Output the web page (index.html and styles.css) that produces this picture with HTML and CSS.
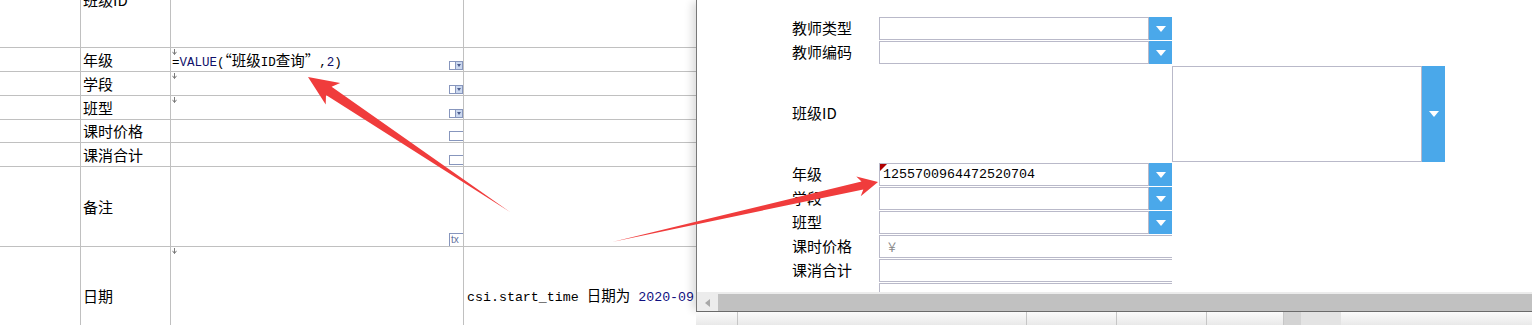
FILE: index.html
```html
<!DOCTYPE html>
<html lang="zh-CN">
<head>
<meta charset="utf-8">
<title>报表设计</title>
<link rel="stylesheet" href="styles.css">
</head>
<body>
<div class="sheet">
  <div class="c c1"></div>
  <div class="c c2"><span class="lbl">班级ID</span></div>
  <div class="c c3"></div>
  <div class="c c4"></div>

  <div class="c c1"></div>
  <div class="c c2"><span class="lbl">年级</span></div>
  <div class="c c3">
    <svg class="mk" width="5" height="6" viewBox="0 0 5 6"><path d="M2.5 0V5.5M0.5 2.8L2.5 5.5L4.5 2.8" stroke="#7a7a7a" fill="none"/></svg>
    <span class="fx">=<span class="kw">VALUE</span>(<span class="cj">“班级</span>ID<span class="cj">查询”</span>,<span class="kw">2</span>)</span>
    <span class="dd"><i></i><b></b></span>
  </div>
  <div class="c c4"></div>

  <div class="c c1"></div>
  <div class="c c2"><span class="lbl">学段</span></div>
  <div class="c c3">
    <svg class="mk" width="5" height="6" viewBox="0 0 5 6"><path d="M2.5 0V5.5M0.5 2.8L2.5 5.5L4.5 2.8" stroke="#7a7a7a" fill="none"/></svg>
    <span class="dd"><i></i><b></b></span>
  </div>
  <div class="c c4"></div>

  <div class="c c1"></div>
  <div class="c c2"><span class="lbl">班型</span></div>
  <div class="c c3">
    <svg class="mk" width="5" height="6" viewBox="0 0 5 6"><path d="M2.5 0V5.5M0.5 2.8L2.5 5.5L4.5 2.8" stroke="#7a7a7a" fill="none"/></svg>
    <span class="dd"><i></i><b></b></span>
  </div>
  <div class="c c4"></div>

  <div class="c c1"></div>
  <div class="c c2"><span class="lbl">课时价格</span></div>
  <div class="c c3"><span class="bx"></span></div>
  <div class="c c4"></div>

  <div class="c c1"></div>
  <div class="c c2"><span class="lbl">课消合计</span></div>
  <div class="c c3"><span class="bx"></span></div>
  <div class="c c4"></div>

  <div class="c c1"></div>
  <div class="c c2"><span class="lbl">备注</span></div>
  <div class="c c3"><span class="tx">tx</span></div>
  <div class="c c4"></div>

  <div class="c c1 last"></div>
  <div class="c c2 last"><span class="lbl low">日期</span></div>
  <div class="c c3 last">
    <svg class="mk" width="5" height="6" viewBox="0 0 5 6"><path d="M2.5 0V5.5M0.5 2.8L2.5 5.5L4.5 2.8" stroke="#7a7a7a" fill="none"/></svg>
  </div>
  <div class="c c4 last"><span class="sql">csi.start_time <span class="cj2">日期为</span> <span class="num">2020-09</span></span></div>
</div>

<div class="dlg-wrap">
  <div class="dialog">
    <div class="form">
      <span class="flbl">教师类型</span>
      <div class="inp"><div class="fld"></div><div class="btn"></div></div>

      <span class="flbl">教师编码</span>
      <div class="inp"><div class="fld"></div><div class="btn"></div></div>

      <span class="flbl">班级ID</span>
      <div class="inp big"><div class="fld"></div><div class="btn"></div></div>

      <span class="flbl">年级</span>
      <div class="inp"><div class="fld err"><span class="val">1255700964472520704</span></div><div class="btn"></div></div>

      <span class="flbl">学段</span>
      <div class="inp"><div class="fld"></div><div class="btn"></div></div>

      <span class="flbl">班型</span>
      <div class="inp"><div class="fld"></div><div class="btn"></div></div>

      <span class="flbl">课时价格</span>
      <div class="inp open"><div class="fld"><span class="yen">￥</span></div></div>

      <span class="flbl">课消合计</span>
      <div class="inp open"><div class="fld"></div></div>

      <span class="flbl"></span>
      <div class="inp open"><div class="fld"></div></div>
    </div>
    <div class="hscroll"><div class="hs-btn"></div><div class="hs-thumb"></div></div>
  </div>
  <div class="strip">
    <span class="sc w1"></span><span class="sc w2"></span><span class="sc w3"></span><span class="sc w3"></span><span class="sc w4"></span><span class="sc dk"></span><span class="sc lt"></span>
  </div>
</div>

<svg class="arrows" width="1532" height="325" viewBox="0 0 1532 325">
  <polygon points="510,212 331.6,86.7 340.2,82.9 308,77 325.7,104.5 326.0,95.1" fill="#f03c3c"/>
  <polygon points="612,242 861.5,181.6 856.3,176.6 878,182 860.7,196.2 863.3,189.4" fill="#f03c3c"/>
</svg>
</body>
</html>
```

FILE: styles.css
```css
* { box-sizing: border-box; }
html, body { margin: 0; padding: 0; }
body {
  width: 1532px;
  height: 325px;
  overflow: hidden;
  background: #fff;
  color: #000;
  font-family: "Noto Sans CJK SC", "Liberation Sans", sans-serif;
  position: relative;
}

/* background report grid */
.sheet {
  display: grid;
  grid-template-columns: 81px 90px 293px 1fr;
  grid-template-rows: 96px 24px 24px 24px 23px 24px 80px 78px;
  margin-top: -48px;
}
.c {
  position: relative;
  display: flex;
  align-items: center;
  border-right: 1px solid #c0c0c0;
  border-bottom: 1px solid #c0c0c0;
}
.c4 { border-right: none; }
.c.last { border-bottom: none; }
.c3 { padding-left: 1px; }
.lbl {
  font-size: 15px;
  line-height: 20px;
  padding-left: 2px;
}
.lbl.low { margin-top: 19px; }
.mk {
  position: absolute;
  left: 1px;
  top: 1px;
}
.fx {
  font-family: "Liberation Mono", "Noto Sans CJK SC", monospace;
  font-size: 12.5px;
  line-height: 18px;
  margin-top: 3px;
  color: #000;
  white-space: pre;
}
.fx .kw { color: #10106a; }
.fx .cj { font-family: "Noto Sans CJK SC", sans-serif; font-size: 14.5px; }

.dd {
  margin-left: auto;
  align-self: flex-end;
  margin-bottom: 1px;
  width: 14px;
  height: 9px;
  display: flex;
}
.dd i {
  width: 6px;
  border: 1px solid #8796bd;
  border-right: none;
  background: #fff;
}
.dd b {
  flex: 1;
  border: 1px solid #8796bd;
  background: #cbd8ef;
  display: flex;
  align-items: center;
  justify-content: center;
}
.dd b::after {
  content: "";
  border-left: 2.5px solid transparent;
  border-right: 2.5px solid transparent;
  border-top: 3px solid #4d5d8d;
}
.bx {
  margin-left: auto;
  align-self: flex-end;
  margin-bottom: 1px;
  width: 14px;
  height: 10px;
  border: 1px solid #8796bd;
  border-right: none;
  background: #fff;
}
.tx {
  margin-left: auto;
  align-self: flex-end;
  width: 14px;
  height: 13px;
  border: 1px solid #8796bd;
  border-right: none;
  border-bottom: none;
  font-family: "Liberation Sans", sans-serif;
  font-size: 10px;
  line-height: 11px;
  color: #6272a0;
  padding-left: 1px;
}
.sql {
  font-family: "Liberation Mono", "Noto Sans CJK SC", monospace;
  font-size: 13.3px;
  line-height: 20px;
  padding-left: 3px;
  margin-top: 21px;
  white-space: pre;
}
.sql .cj2 { font-family: "Noto Sans CJK SC", sans-serif; font-size: 14.5px; }
.sql .num { color: #101080; }

/* dialog window */
.dlg-wrap {
  position: absolute;
  left: 696px;
  top: 0;
  width: 836px;
  height: 325px;
  display: flex;
  flex-direction: column;
}
.dialog {
  flex: none;
  height: 312px;
  background: #fff;
  border-left: 1px solid #777;
  border-bottom: 1px solid #6a6a6a;
  box-shadow: -6px 0 8px -2px rgba(0, 0, 0, 0.14);
  display: flex;
  flex-direction: column;
}
.form {
  flex: 1;
  overflow: hidden;
  display: grid;
  grid-template-columns: 87px 293px 273px;
  grid-template-rows: 23px 23px 97px 23px 23px 23px 23px 23px 23px;
  row-gap: 1px;
  align-content: start;
  padding: 17px 0 0 95px;
}
.flbl {
  grid-column: 1;
  font-size: 15px;
  line-height: 20px;
  display: flex;
  align-items: center;
  margin-top: -1px;
}
.inp {
  grid-column: 2;
  display: flex;
}
.inp.big {
  grid-column: 3;
  margin-top: 1px;
  height: 96px;
}
.fld {
  flex: 1;
  position: relative;
  border: 1px solid #b9b9c9;
  display: flex;
  align-items: center;
  padding-left: 3px;
}
.inp.open .fld { border-right: none; }
.fld.err::before {
  content: "";
  position: absolute;
  left: 0;
  top: 0;
  border-top: 7px solid #b00000;
  border-right: 7px solid transparent;
}
.val {
  font-family: "Liberation Mono", monospace;
  font-size: 13.33px;
  line-height: 18px;
}
.yen {
  font-size: 12px;
  color: #888;
  padding-left: 3px;
}
.btn {
  width: 23px;
  flex: none;
  background: #4aa8ea;
  display: flex;
  align-items: center;
  justify-content: center;
}
.btn::after {
  content: "";
  border-left: 5px solid transparent;
  border-right: 5px solid transparent;
  border-top: 6px solid #fff;
}
.hscroll {
  flex: none;
  height: 19px;
  display: flex;
  background: #c1c1c1;
  border-top: 2px solid #ececec;
}
.hs-btn {
  width: 21px;
  background: #ececec;
  display: flex;
  align-items: center;
  justify-content: center;
}
.hs-btn::before {
  content: "";
  border-right: 5px solid #a8a8a8;
  border-top: 4px solid transparent;
  border-bottom: 4px solid transparent;
}
.hs-thumb { flex: 1; }

.strip {
  flex: 1;
  display: flex;
  background: linear-gradient(#fbfbfb, #e9e9e9);
}
.sc { border-right: 1px solid #c6c6c6; }
.sc.w1 { width: 42px; }
.sc.w2 { width: 289px; }
.sc.w3 { width: 90px; }
.sc.w4 { width: 77px; }
.sc.dk { width: 17px; background: #d3d3d3; border-right: none; }
.sc.lt { width: 40px; background: #e3e3e3; border-right: none; }

.arrows {
  position: absolute;
  left: 0;
  top: 0;
  pointer-events: none;
}
```
